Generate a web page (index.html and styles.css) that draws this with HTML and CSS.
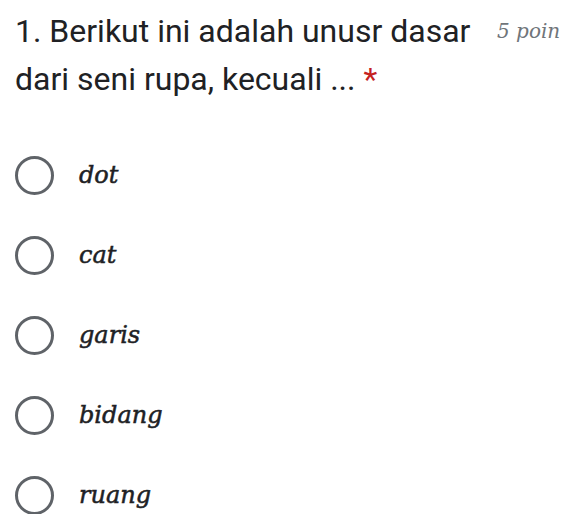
FILE: index.html
```html
<!DOCTYPE html>
<html>
<head>
<meta charset="utf-8">
<link rel="stylesheet" href="styles.css">
</head>
<body>
<div class="page">
  <div class="header">
    <div class="title">1. Berikut ini adalah unusr dasar dari seni rupa, kecuali ... <span class="req">*</span></div>
    <div class="points">5 poin</div>
  </div>
  <div class="options">
    <div class="option"><span class="radio"></span><span class="label">dot</span></div>
    <div class="option"><span class="radio"></span><span class="label">cat</span></div>
    <div class="option"><span class="radio"></span><span class="label">garis</span></div>
    <div class="option"><span class="radio"></span><span class="label">bidang</span></div>
    <div class="option"><span class="radio"></span><span class="label">ruang</span></div>
  </div>
</div>
</body>
</html>
```
FILE: styles.css
```css
html, body {
  margin: 0;
  padding: 0;
  background: #ffffff;
}
.page {
  width: 576px;
  height: 514px;
  overflow: hidden;
  padding: 7px 0 0 15px;
  box-sizing: border-box;
}
.header {
  display: flex;
  align-items: flex-start;
}
.title {
  width: 476px;
  flex: none;
  font-family: Roboto, "Liberation Sans", sans-serif;
  font-size: 32px;
  font-weight: 400;
  line-height: 48px;
  color: #202124;
}
.req {
  color: #c5221f;
}
.points {
  margin-left: 6px;
  font-family: "DejaVu Serif", serif;
  font-style: italic;
  font-size: 20px;
  line-height: 48px;
  color: #70757a;
  white-space: nowrap;
}
.options {
  margin-top: 53px;
  display: flex;
  flex-direction: column;
  gap: 42px;
}
.option {
  display: flex;
  align-items: center;
  height: 38px;
}
.radio {
  width: 33px;
  height: 33px;
  border: 3px solid #5f6368;
  border-radius: 50%;
  flex: none;
}
.label {
  margin-left: 25px;
  font-family: "DejaVu Serif", serif;
  font-style: italic;
  font-size: 24px;
  color: #202124;
  -webkit-text-stroke: 0.5px #202124;
}
```
